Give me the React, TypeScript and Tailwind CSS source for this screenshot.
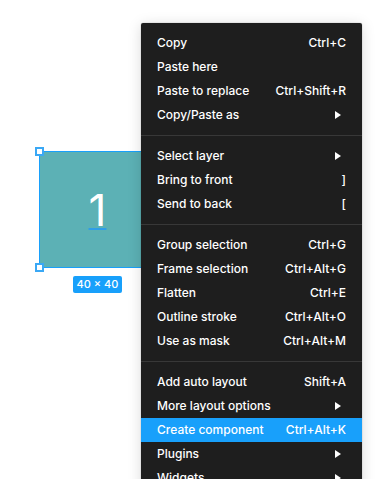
import React from "react";

type Item = { label: string; shortcut?: string; submenu?: boolean; active?: boolean };

const groups: Item[][] = [
  [
    { label: "Copy", shortcut: "Ctrl+C" },
    { label: "Paste here" },
    { label: "Paste to replace", shortcut: "Ctrl+Shift+R" },
    { label: "Copy/Paste as", submenu: true },
  ],
  [
    { label: "Select layer", submenu: true },
    { label: "Bring to front", shortcut: "]" },
    { label: "Send to back", shortcut: "[" },
  ],
  [
    { label: "Group selection", shortcut: "Ctrl+G" },
    { label: "Frame selection", shortcut: "Ctrl+Alt+G" },
    { label: "Flatten", shortcut: "Ctrl+E" },
    { label: "Outline stroke", shortcut: "Ctrl+Alt+O" },
    { label: "Use as mask", shortcut: "Ctrl+Alt+M" },
  ],
  [
    { label: "Add auto layout", shortcut: "Shift+A" },
    { label: "More layout options", submenu: true },
    { label: "Create component", shortcut: "Ctrl+Alt+K", active: true },
    { label: "Plugins", submenu: true },
    { label: "Widgets", submenu: true },
  ],
];

const Arrow = () => (
  <svg width="6" height="8" viewBox="0 0 6 8" className="mr-[5px]">
    <path d="M0 0 L6 4 L0 8 Z" fill="#ffffff" />
  </svg>
);

const Handle = ({ className }: { className: string }) => (
  <div className={`absolute w-[9px] h-[9px] bg-white border-2 border-[#3aa8f5] ${className}`} />
);

const App = () => {
  return (
    <div
      className="relative w-[387px] h-[479px] overflow-hidden bg-white"
      style={{ fontFamily: "Inter, 'Liberation Sans', sans-serif" }}
    >
      {/* selected shape on the canvas */}
      <div className="absolute left-[39px] top-[151px] flex flex-col items-center gap-2">
        <div className="relative w-[117px] h-[117px] bg-[#5cb1b5] border border-[#18a0fb] flex items-center justify-center">
          <span className="text-white text-[44px] font-normal leading-none underline decoration-[#2f9ee8] decoration-2 underline-offset-[2px]">
            1
          </span>
          <Handle className="-left-[5px] -top-[5px]" />
          <Handle className="-left-[5px] -bottom-[5px]" />
        </div>
        <div className="px-[4px] h-[17px] rounded-[2px] bg-[#18a0fb] text-white text-[11px] font-medium flex items-center">
          40 × 40
        </div>
      </div>

      {/* context menu */}
      <div className="absolute left-[141px] top-[23px] w-[221px] bg-[#1e1e1e] rounded-[2px] shadow-[0_2px_14px_rgba(0,0,0,0.15),0_0_0_0.5px_rgba(0,0,0,0.1)] text-white text-[12px] font-medium">
        {groups.map((group, gi) => (
          <div key={gi} className={`py-2 ${gi > 0 ? "border-t border-[#383838]" : ""}`}>
            {group.map((item) => (
              <div
                key={item.label}
                className={`h-6 px-4 flex items-center justify-between ${item.active ? "bg-[#18a0fb]" : ""}`}
              >
                <span>{item.label}</span>
                {item.submenu ? <Arrow /> : item.shortcut ? <span>{item.shortcut}</span> : null}
              </div>
            ))}
          </div>
        ))}
      </div>
    </div>
  );
};

export default App;
